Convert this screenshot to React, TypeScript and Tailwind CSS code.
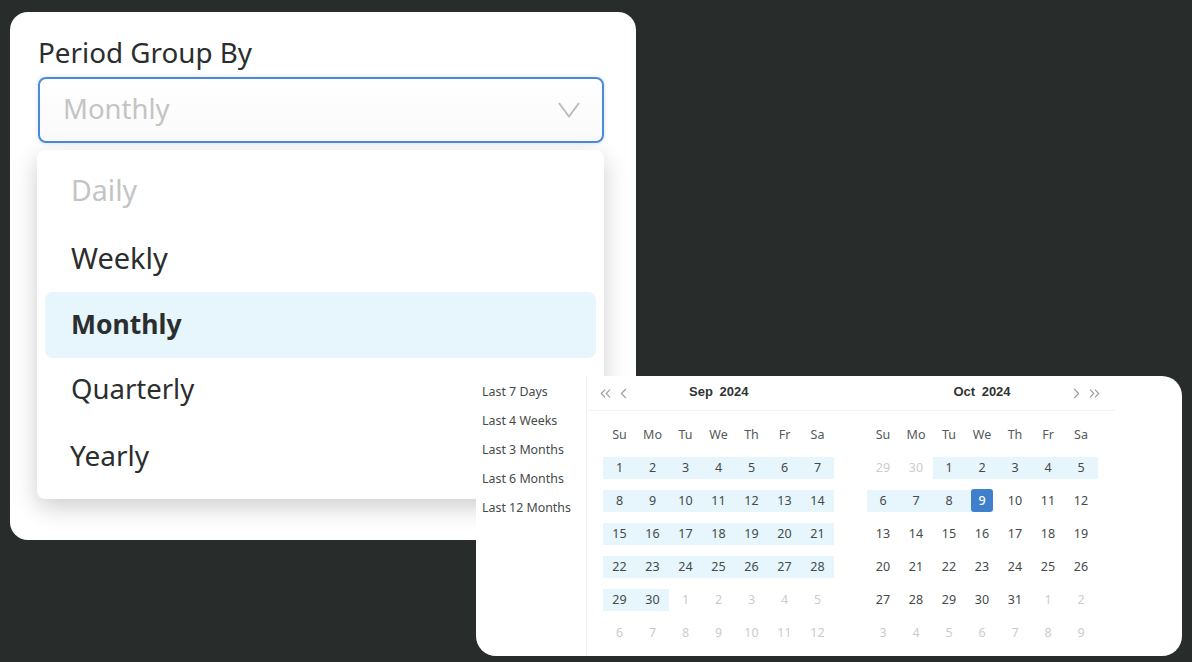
import { ChevronLeft, ChevronRight, ChevronsLeft, ChevronsRight } from "lucide-react";

const weekdays = ["Su", "Mo", "Tu", "We", "Th", "Fr", "Sa"];
const presets = ["Last 7 Days", "Last 4 Weeks", "Last 3 Months", "Last 6 Months", "Last 12 Months"];

type Day = { label: number; muted?: boolean; range?: boolean; selected?: boolean };

const sep: Day[] = [
  ...Array.from({ length: 30 }, (_, i) => ({ label: i + 1, range: true })),
  ...Array.from({ length: 12 }, (_, i) => ({ label: i + 1, muted: true })),
];

const oct: Day[] = [
  { label: 29, muted: true },
  { label: 30, muted: true },
  ...Array.from({ length: 31 }, (_, i) => ({
    label: i + 1,
    range: i < 8,
    selected: i === 8,
  })),
  ...Array.from({ length: 9 }, (_, i) => ({ label: i + 1, muted: true })),
];

function Month({ days }: { days: Day[] }) {
  return (
    <div className="w-[231px]">
      <div className="grid h-[33px] grid-cols-7 items-center text-[12.5px] text-[#555a5a]">
        {weekdays.map((d) => (
          <span key={d} className="text-center">
            {d}
          </span>
        ))}
      </div>
      <div className="grid grid-cols-7">
        {days.map((d, i) => (
          <div key={i} className="relative flex h-[33px] items-center justify-center text-[12.5px]">
            {(d.range || d.selected) && (
              <span
                className={
                  d.selected
                    ? "absolute left-0 top-[4.5px] h-[22px] w-[10px] bg-[#e7f5fc]"
                    : "absolute inset-x-0 top-[4.5px] h-[22px] bg-[#e7f5fc]"
                }
              />
            )}
            {d.selected && (
              <span className="absolute left-[5.5px] top-[4px] h-[23px] w-[22px] rounded-[3px] bg-[#3f7fcb]" />
            )}
            <span
              className={
                d.selected
                  ? "relative font-medium text-white"
                  : d.muted
                    ? "relative text-[#cccccc]"
                    : "relative text-[#454a4a]"
              }
            >
              {d.label}
            </span>
          </div>
        ))}
      </div>
    </div>
  );
}

export default function App() {
  return (
    <div
      className="relative h-[662px] w-[1192px] overflow-hidden bg-[#282c2b] pl-[10px] pt-[12px]"
      style={{ fontFamily: '"Noto Sans", sans-serif' }}
    >
      <div className="h-[528px] w-[626px] rounded-[18px] bg-white pl-[28px] pr-[32px] pt-[23px]">
        <div className="h-[34px] text-[27.8px] leading-[34px] text-[#2a2e2e]">Period Group By</div>
        <div className="mt-[8px] flex h-[66px] items-center justify-between rounded-[8px] border-2 border-[#4a8ad8] bg-gradient-to-b from-white to-[#fafafa] pl-[23px] pr-[22px] text-[27.5px] text-[#c4c4c4] shadow-[0_0_4px_rgba(74,138,216,0.25)]">
          <span className="mb-[2px]">Monthly</span>
          <svg width="22" height="16" viewBox="0 0 22 16" fill="none" stroke="#bdbdbd" strokeWidth="2">
            <path d="M1 1 11 14.5 21 1" />
          </svg>
        </div>
        <div className="ml-[-1px] mt-[7px] h-[349px] rounded-[8px] bg-white p-[8px] pt-[9px] text-[28px] text-[#2a2e2e] shadow-[0_8px_24px_rgba(0,0,0,0.2)]">
          <div className="flex h-[66.5px] items-center px-[26px] pb-[4px] text-[28.5px] text-[#c4c4c4]">Daily</div>
          <div className="flex h-[66.5px] items-center px-[26px] pb-[2px] text-[29px]">Weekly</div>
          <div className="flex h-[65.5px] items-center rounded-[8px] bg-[#e7f5fc] px-[26px] text-[26.5px] font-bold">
            Monthly
          </div>
          <div className="flex h-[66.5px] items-center px-[26px] pb-[5px] text-[27.5px]">Quarterly</div>
          <div className="flex h-[66.5px] items-center px-[25px] pb-[5px]">Yearly</div>
        </div>
      </div>

      <div className="absolute left-[476px] top-[376px] flex h-[280px] w-[705.5px] rounded-[20px] bg-white">
        <div className="w-[111px] shrink-0 border-r border-[#f1f1f1] pl-[6px] pt-[2px]">
          {presets.map((p) => (
            <div key={p} className="flex h-[29px] items-center text-[12.4px] text-[#454a4a]">
              {p}
            </div>
          ))}
        </div>
        <div className="w-[528px]">
          <div className="flex h-[35px] items-center border-b border-[#f3f3f3] pl-[10px] pr-[12px] text-[#a0a0a0]">
            <ChevronsLeft size={17} strokeWidth={1.6} />
            <ChevronLeft size={17} strokeWidth={1.6} className="ml-[1px]" />
            <span
              className="mb-[2px] ml-[57px] text-[13px] font-bold text-[#2f3333]"
              style={{ fontFamily: '"Liberation Sans", sans-serif', wordSpacing: "3px" }}
            >
              Sep 2024
            </span>
            <span
              className="mb-[2px] ml-[205px] text-[13px] font-bold text-[#2f3333]"
              style={{ fontFamily: '"Liberation Sans", sans-serif', wordSpacing: "3px" }}
            >
              Oct 2024
            </span>
            <ChevronRight size={17} strokeWidth={1.6} className="ml-auto" />
            <ChevronsRight size={17} strokeWidth={1.6} className="ml-[1px]" />
          </div>
          <div className="flex gap-[32.5px] pl-[16px] pt-[8px]">
            <Month days={sep} />
            <Month days={oct} />
          </div>
        </div>
      </div>
    </div>
  );
}
